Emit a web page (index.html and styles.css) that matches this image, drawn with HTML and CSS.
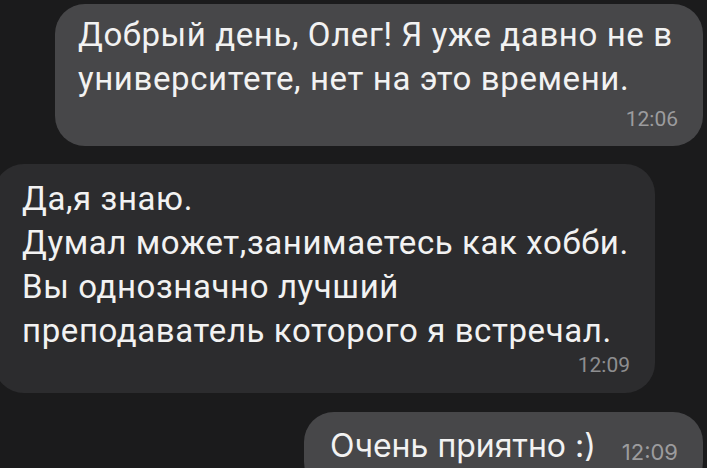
FILE: index.html
```html
<!DOCTYPE html>
<html lang="ru">
<head>
    <meta charset="UTF-8">
    <meta name="viewport" content="width=device-width, initial-scale=1.0">
    <title>Чат</title>
    <link rel="stylesheet" href="styles.css">
</head>
<body>
    <div class="chat">
        <div class="message out first">
            <p class="message-text">Добрый день, Олег! Я уже давно не в университете, нет на это времени.</p>
            <div class="message-time">12:06</div>
        </div>

        <div class="message in">
            <p class="message-text">Да,я знаю.<br>Думал может,занимаетесь как хобби.<br>Вы однозначно лучший<br>преподаватель которого я встречал.</p>
            <div class="message-time">12:09</div>
        </div>

        <div class="message out short">
            <span class="message-text">Очень приятно :)</span>
            <span class="message-time">12:09</span>
        </div>
    </div>
</body>
</html>
```

FILE: styles.css
```css
body {
    margin: 0;
    padding: 0;
    background-color: #1b1b1c;
    color: #f2f2f2;
    font-family: Roboto, 'Liberation Sans', sans-serif;
    overflow: hidden;
}
.chat {
    display: flex;
    flex-direction: column;
    gap: 18px;
    padding-top: 4px;
}
.message {
    border-radius: 30px;
    box-sizing: border-box;
}
.message-text {
    margin: 0;
    font-size: 33px;
    line-height: 44px;
    letter-spacing: 0.6px;
    white-space: nowrap;
}
.first .message-text {
    white-space: normal;
}
.message-time {
    font-size: 21px;
    line-height: 24px;
    text-align: right;
    color: #9c9c9e;
}
.out {
    background-color: #474749;
    align-self: flex-end;
    margin-right: 4px;
}
.in {
    background-color: #2c2c2e;
    align-self: flex-start;
    margin-left: -6px;
    width: 661px;
    height: 229px;
    padding: 13px 25px 0 28px;
}
.in .message-time {
    color: #8e8e90;
}
.first {
    width: 648px;
    height: 142px;
    padding: 9px 20px 0 23px;
}
.first .message-time {
    margin-top: 6px;
    padding-right: 5px;
}
.short {
    width: 399px;
    height: 80px;
    margin-top: 1px;
    padding: 12px 25px 0 26px;
    display: flex;
    align-items: baseline;
    justify-content: space-between;
}
.short .message-text {
    font-family: Inter, Roboto, sans-serif;
    font-size: 32px;
    letter-spacing: 0;
}
.short .message-time {
    font-family: Inter, Roboto, sans-serif;
    font-size: 22px;
    position: relative;
    top: 3px;
}
```
